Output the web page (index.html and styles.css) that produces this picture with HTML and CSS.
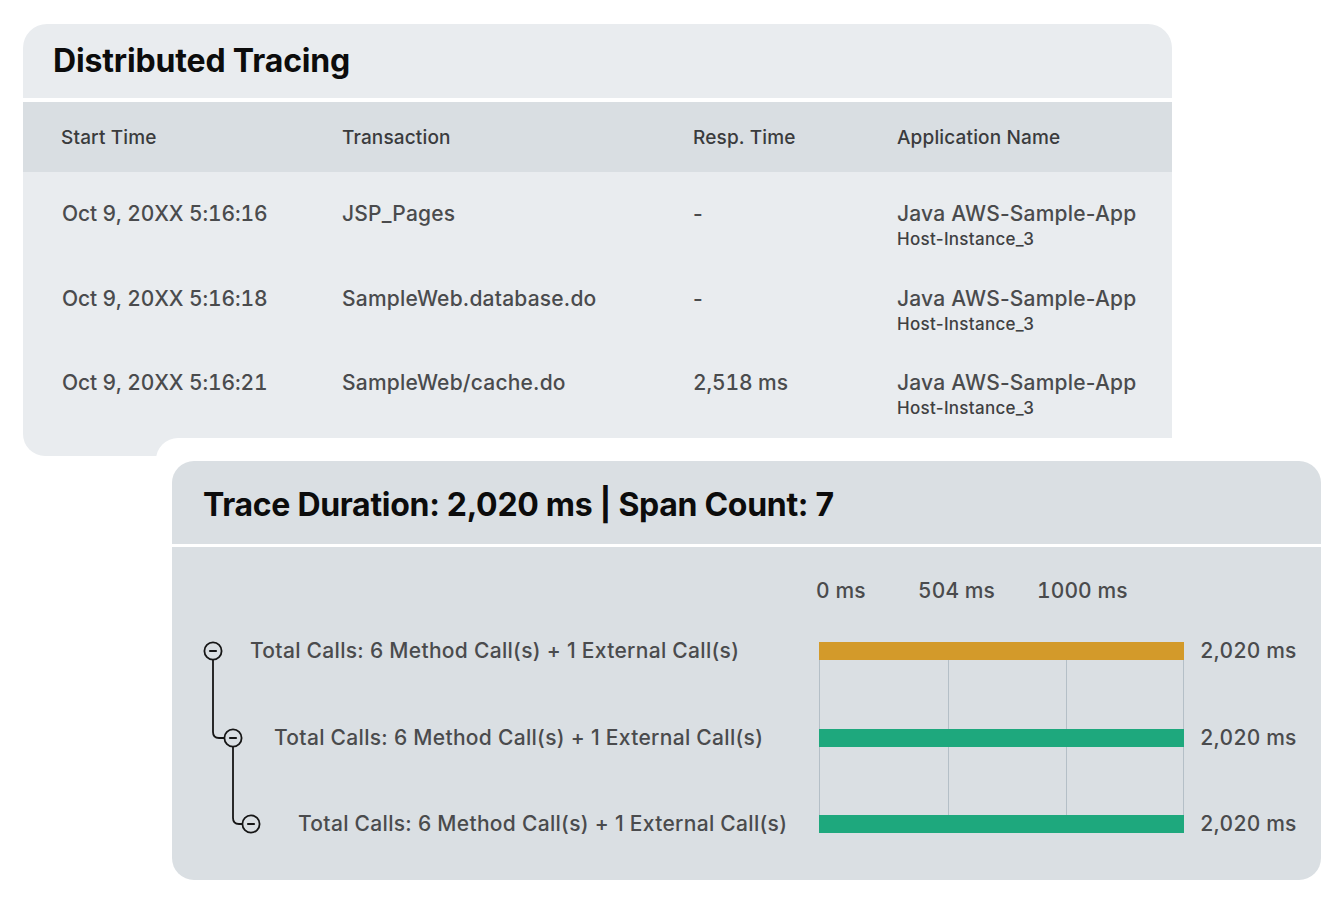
FILE: index.html
```html
<!DOCTYPE html>
<html lang="en">
<head>
<meta charset="utf-8">
<title>Distributed Tracing</title>
<link rel="stylesheet" href="styles.css">
</head>
<body>
<div class="page">
  <section class="card trace-list">
    <header class="trace-list-head">
      <h1 class="title">Distributed Tracing</h1>
    </header>
    <div class="table">
      <div class="thead">
        <div class="th">Start Time</div>
        <div class="th">Transaction</div>
        <div class="th">Resp. Time</div>
        <div class="th">Application Name</div>
      </div>
      <div class="tr">
        <div class="td num">Oct 9, 20XX 5:16:16</div>
        <div class="td">JSP_Pages</div>
        <div class="td">-</div>
        <div class="td"><div>Java AWS-Sample-App</div><div class="sub">Host-Instance_3</div></div>
      </div>
      <div class="tr">
        <div class="td num">Oct 9, 20XX 5:16:18</div>
        <div class="td">SampleWeb.database.do</div>
        <div class="td">-</div>
        <div class="td"><div>Java AWS-Sample-App</div><div class="sub">Host-Instance_3</div></div>
      </div>
      <div class="tr">
        <div class="td num">Oct 9, 20XX 5:16:21</div>
        <div class="td">SampleWeb/cache.do</div>
        <div class="td num">2,518 ms</div>
        <div class="td"><div>Java AWS-Sample-App</div><div class="sub">Host-Instance_3</div></div>
      </div>
    </div>
  </section>

  <div class="detail-wrap">
    <section class="card detail">
      <header class="detail-head">
        <h2 class="title">Trace Duration: 2,020 ms | Span Count: 7</h2>
      </header>
      <div class="detail-body">
        <div class="axis num">
          <span class="tick tick-0">0 ms</span>
          <span class="tick tick-1">504 ms</span>
          <span class="tick tick-2">1000 ms</span>
        </div>

        <svg class="tree" width="120" height="260" viewBox="0 0 120 260" aria-hidden="true">
          <g fill="none" stroke="#161616" stroke-width="1.8">
            <path d="M41 52 V124 Q41 130 47 130 H52.5"/>
            <path d="M61 139 V210 Q61 216 67 216 H70.5"/>
            <circle cx="41" cy="43" r="8.6"/>
            <circle cx="61" cy="130" r="8.6"/>
            <circle cx="79" cy="216" r="8.6"/>
          </g>
          <g stroke="#161616" stroke-width="2.2" stroke-linecap="round">
            <line x1="38" y1="43" x2="44" y2="43"/>
            <line x1="58" y1="130" x2="64" y2="130"/>
            <line x1="76" y1="216" x2="82" y2="216"/>
          </g>
        </svg>

        <div class="grid-lines"></div>

        <div class="label level-1 row-1">Total Calls: 6 Method Call(s) + 1 External Call(s)</div>
        <div class="bar bar-root row-1"></div>
        <div class="value num row-1">2,020 ms</div>

        <div class="label level-2 row-2">Total Calls: 6 Method Call(s) + 1 External Call(s)</div>
        <div class="bar bar-child row-2"></div>
        <div class="value num row-2">2,020 ms</div>

        <div class="label level-3 row-3">Total Calls: 6 Method Call(s) + 1 External Call(s)</div>
        <div class="bar bar-child row-3"></div>
        <div class="value num row-3">2,020 ms</div>
      </div>
    </section>
  </div>
</div>
</body>
</html>
```

FILE: styles.css
```css
* { box-sizing: border-box; }

html, body {
  margin: 0;
  padding: 0;
  background: #ffffff;
}

body {
  font-family: Inter, "Noto Sans", "Liberation Sans", sans-serif;
  font-weight: 500;
  color: #4a4b4d;
}

.num { font-variant-numeric: tabular-nums; }

.page {
  padding-top: 24px;
  width: 1344px;
  height: 902px;
  overflow: hidden;
}

.title {
  margin: 0;
  font-weight: 700;
  color: #0c0c0c;
  font-size: 32px;
  letter-spacing: -0.15px;
  line-height: 40px;
}

.detail-head .title { letter-spacing: -0.3px; }

/* ---------- card 1 ---------- */
.trace-list {
  margin-left: 23px;
  width: 1149px;
  height: 432px;
  background: #e9ecef;
  border-radius: 24px 24px 0 22px;
  overflow: hidden;
}

.trace-list-head {
  height: 78px;
  padding: 17px 0 0 30px;
  border-bottom: 4px solid #ffffff;
}

.thead,
.tr {
  display: grid;
  grid-template-columns: 281px 351px 204px 1fr;
  padding-left: 38px;
}

.thead {
  height: 70px;
  align-items: center;
  background: #d9dee2;
  font-size: 19px;
  color: #3a3b3d;
  letter-spacing: 0.15px;
}

.tr {
  height: 84.5px;
  padding-top: 29px;
  font-size: 21px;
  line-height: 26px;
  letter-spacing: 0.2px;
}

.td.num { letter-spacing: -0.1px; }

.td:first-child { padding-left: 1px; }

.sub {
  margin-top: 2px;
  font-size: 17px;
  line-height: 20px;
  color: #3f4042;
  letter-spacing: 0.3px;
}

/* ---------- card 2 ---------- */
.detail-wrap {
  position: relative;
  margin-top: -18px;
  margin-left: 156px;
  width: 1165px;
  padding: 23px 0 0 16px;
  background: #ffffff;
  border-radius: 22px 0 0 0;
}

.detail {
  width: 1149px;
  height: 419px;
  background: #dadfe3;
  border-radius: 22px;
  overflow: hidden;
}

.detail-head {
  height: 86px;
  padding: 24px 0 0 31px;
  border-bottom: 3px solid #ffffff;
}

.detail-body {
  display: grid;
  grid-template-columns: 647px 365px 1fr;
  grid-template-rows: 61px 86.5px 86px 86.5px;
  font-size: 21px;
  line-height: 26px;
  letter-spacing: 0.1px;
}

.axis {
  grid-column: 2 / 4;
  grid-row: 1;
  display: flex;
  align-items: flex-start;
  padding-top: 31px;
  margin-left: -3px;
}

.tick { white-space: nowrap; }
.tick-0 { width: 102px; }
.tick-1 { width: 119px; }

.tree {
  grid-column: 1;
  grid-row: 2 / 5;
  align-self: start;
}

.grid-lines {
  grid-column: 2;
  grid-row: 2 / 5;
  margin: 34px 0 34px 0;
  background:
    linear-gradient(#b4bfc7, #b4bfc7) 0 0 / 1px 100% no-repeat,
    linear-gradient(#b4bfc7, #b4bfc7) 129px 0 / 1px 100% no-repeat,
    linear-gradient(#b4bfc7, #b4bfc7) 247px 0 / 1px 100% no-repeat,
    linear-gradient(#b4bfc7, #b4bfc7) 100% 0 / 1px 100% no-repeat;
}

.row-1 { grid-row: 2; }
.row-2 { grid-row: 3; }
.row-3 { grid-row: 4; }

.label {
  grid-column: 1;
  align-self: center;
  white-space: nowrap;
  letter-spacing: 0.3px;
}

.level-1 { padding-left: 78px; }
.level-2 { padding-left: 102px; }
.level-3 { padding-left: 126px; }

.bar {
  grid-column: 2;
  align-self: center;
  height: 18px;
}

.bar-root { background: #d39a2a; }
.bar-child { background: #1ea87d; }

.value {
  grid-column: 3;
  align-self: center;
  padding-left: 16px;
  white-space: nowrap;
}
```
